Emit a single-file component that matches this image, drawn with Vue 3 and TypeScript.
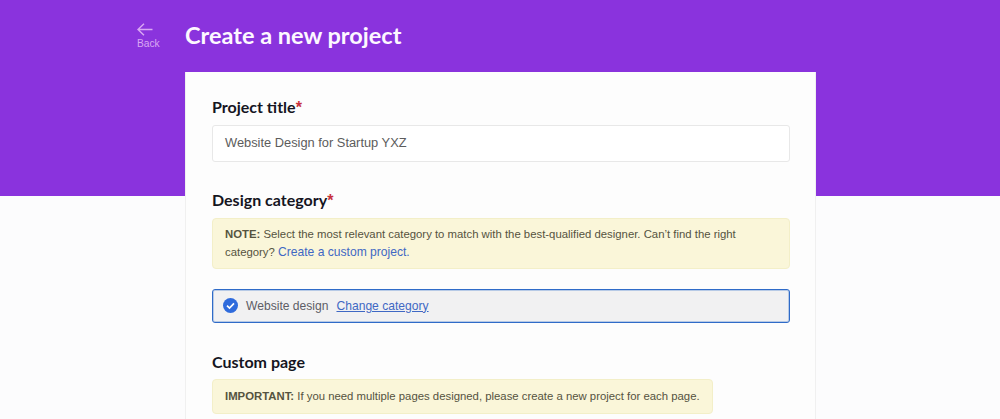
<script setup lang="ts">
const title = 'Website Design for Startup YXZ'
</script>

<template>
  <div class="page">
    <header class="band">
      <div class="head-row">
        <a class="back">
          <svg width="16" height="13" viewBox="0 0 16 13" fill="none" stroke="currentColor" stroke-width="1.4">
            <path d="M15.5 6.5H1M7 .7L1 6.5l6 5.8" />
          </svg>
          <span>Back</span>
        </a>
        <h1>Create a new project</h1>
      </div>
    </header>
    <main class="card">
      <h2 class="first">Project title<em>*</em></h2>
      <div class="input">{{ title }}</div>
      <h2 class="second">Design category<em>*</em></h2>
      <div class="note">
        <b>NOTE:</b> Select the most relevant category to match with the best-qualified designer. Can’t find the right category?
        <a class="big">Create a custom project.</a>
      </div>
      <div class="selected">
        <svg width="15" height="15" viewBox="0 0 15 15">
          <circle cx="7.5" cy="7.5" r="7.5" fill="#2f6bdc" />
          <path d="M4 7.7l2.5 2.4L11 5.4" fill="none" stroke="#fff" stroke-width="1.7" />
        </svg>
        <span class="sel-name">Website design</span>
        <a class="change">Change category</a>
      </div>
      <h2 class="third">Custom page</h2>
      <div class="note short">
        <b>IMPORTANT:</b> If you need multiple pages designed, please create a new project for each page.
      </div>
    </main>
  </div>
</template>

<style>
html, body { margin: 0; background: #fcfcfd; overflow: hidden; }
</style>

<style scoped>
.page {
  height: 419px;
  overflow: hidden;
  font-family: "Liberation Sans", Arial, sans-serif;
}
.band {
  height: 196px;
  background: #8a33dd;
}
.head-row {
  width: 631px;
  margin-left: 185px;
  height: 70px;
  display: flex;
  align-items: center;
  position: relative;
}
.back {
  position: absolute;
  left: -48px;
  top: 23px;
  display: flex;
  flex-direction: column;
  align-items: flex-start;
  color: #d9a8f3;
  font-size: 10.2px;
  line-height: 12px;
  gap: 2px;
}
h1 {
  margin: 0;
  color: #fdf8ff;
  font: 700 23.5px/30px Lato, sans-serif;
}
.card {
  width: 631px;
  box-sizing: border-box;
  margin: -124px 0 0 185px;
  height: 400px;
  background: #fdfdfd;
  padding: 1px 26px 0 27px;
  box-shadow: inset 1px 0 0 #f0f0f0, inset -1px 0 0 #f0f0f0;
}
h2 {
  margin: 0;
  color: #15151f;
  font: 700 16px/22px Lato, sans-serif;
}
h2 em {
  color: #c8323c;
  font: 700 16px/16px "Liberation Sans", sans-serif;
}
.first { margin-top: 23px; }
.second { margin-top: 27px; }
.third { margin-top: 28px; }
.input {
  margin-top: 7px;
  height: 37px;
  box-sizing: border-box;
  border: 1px solid #e8e8e8;
  border-radius: 3px;
  background: #fff;
  padding: 0 12px;
  color: #5c5c5c;
  font-size: 12.85px;
  line-height: 34px;
}
.note {
  margin-top: 7px;
  box-sizing: border-box;
  background: #faf6d9;
  border: 1px solid #f3efc8;
  border-radius: 4px;
  padding: 6px 12px 7px;
  color: #55533f;
  font-size: 11.35px;
  line-height: 18px;
}
.note b { font-weight: 700; }
.big {
  color: #3f68c4;
  font-size: 12.1px;
}
.selected {
  margin-top: 20px;
  height: 34px;
  box-sizing: border-box;
  display: flex;
  align-items: center;
  border: 1px solid #2f6bc8;
  box-shadow: inset 0 0 0 1px rgba(74, 128, 210, 0.35);
  border-radius: 3px;
  background: #f1f1f2;
  padding-left: 10px;
  padding-bottom: 1px;
  font-size: 12.1px;
}
.sel-name {
  margin-left: 8px;
  color: #5d5d66;
}
.change {
  margin-left: 8px;
  color: #3f68c4;
  text-decoration: underline;
}
.short {
  margin-top: 6px;
  width: 501px;
  height: 35px;
  padding-top: 7px;
  white-space: nowrap;
}
</style>
